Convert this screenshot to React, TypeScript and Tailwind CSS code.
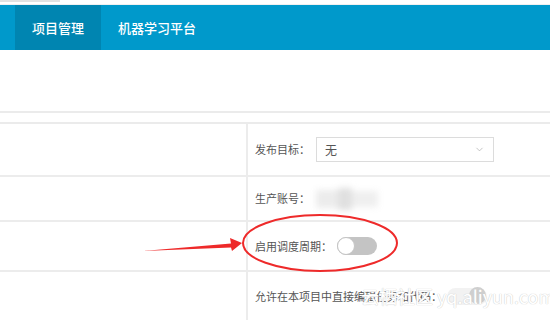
import { ChevronDown } from 'lucide-react';

function Toggle({ faint }: { faint?: boolean }) {
  if (faint) {
    return (
      <div className="relative w-[40px] h-[17px] rounded-full bg-[#f2f2f2]">
        <div className="absolute right-[1px] top-[-1px] w-[17px] h-[17px] rounded-full bg-[#cfcfcf]" />
      </div>
    );
  }
  return (
    <div className="relative w-[40px] h-[18px] rounded-full bg-[#c4c4c4]">
      <div className="absolute left-0 top-0 w-[18px] h-[18px] rounded-full bg-white border border-[#c4c4c4]" />
    </div>
  );
}

export default function App() {
  const font = { fontFamily: '"Noto Sans CJK SC", "Noto Sans", sans-serif' };

  return (
    <div className="relative w-[550px] h-[320px] overflow-hidden bg-white" style={font}>
      <div className="h-[5px] border-b border-[#f0f0f0]">
        <div className="w-[60px] h-[2px] bg-[#e2e2e2]" />
      </div>

      <nav className="h-[45px] bg-[#0099cb] flex pl-[15px] text-white text-[13px] font-medium">
        <div className="w-[86px] bg-[#0085b1] flex items-center justify-center">项目管理</div>
        <div className="flex items-center pl-[17px]">机器学习平台</div>
      </nav>

      <div className="h-[63px] border-b-2 border-[#ebebeb]" />
      <div className="h-[11px] border-b-2 border-[#ebebeb]" />

      <div className="grid grid-cols-[248px_1fr] text-[11px] text-[#555]">
        <div className="h-[53px] border-r-2 border-b-2 border-[#ececec]" />
        <div className="h-[53px] border-b-2 border-[#ececec] flex items-center pl-[7px]">
          <span>发布目标：</span>
          <div className="ml-[6px] w-[178px] h-[25px] border border-[#dcdcdc] flex items-center justify-between pl-[8px] pr-[8px]">
            <span className="text-[12px] text-[#555]">无</span>
            <ChevronDown size={11} className="text-[#aaa]" strokeWidth={1.5} />
          </div>
        </div>

        <div className="h-[45px] border-r-2 border-b-2 border-[#ececec]" />
        <div className="h-[45px] border-b-2 border-[#ececec] flex items-center pl-[7px]">
          <span>生产账号：</span>
          <div className="ml-[6px] flex items-center blur-[3px]">
            <div className="w-[22px] h-[18px] bg-[#ececec]" />
            <div className="w-[14px] h-[22px] bg-[#e0e0e0]" />
            <div className="w-[26px] h-[16px] bg-[#efefef]" />
          </div>
        </div>

        <div className="h-[50px] border-r-2 border-b-2 border-[#ececec]" />
        <div className="h-[50px] border-b-2 border-[#ececec] flex items-center pl-[7px]">
          <span>启用调度周期：</span>
          <div className="ml-[5px]">
            <Toggle />
          </div>
        </div>

        <div className="h-[48px] border-r-2 border-[#ececec]" />
        <div className="h-[48px] flex items-center pl-[7px]">
          <span>允许在本项目中直接编辑任务和代码：</span>
          <div className="ml-[5px]">
            <Toggle faint />
          </div>
        </div>
      </div>

      <div
        className="absolute left-[361px] top-[285px] text-[18px] leading-[22px] text-white whitespace-nowrap"
        style={{ textShadow: '0 0 1px #cfcfcf, 0 0 1px #cfcfcf' }}
      >
        云栖社区 yq.aliyun.com
      </div>

      <svg className="absolute inset-0 pointer-events-none" width="550" height="320">
        <ellipse cx="320" cy="243" rx="77" ry="28" fill="none" stroke="#ee2a2a" strokeWidth="2" />
        <polygon points="143,251 231,243.5 230,238 242,243 232,251 231,247.5" fill="#ee2a2a" />
      </svg>
    </div>
  );
}
